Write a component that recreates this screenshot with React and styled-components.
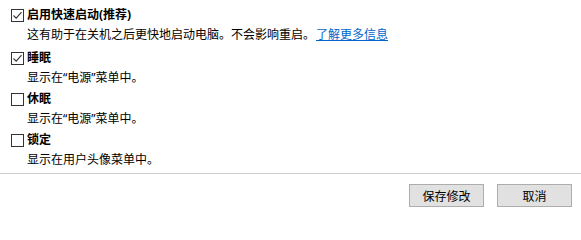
import React from "react";
import styled, { createGlobalStyle } from "styled-components";

const GlobalStyle = createGlobalStyle`
  body {
    margin: 0;
    background: #ffffff;
    font-family: "Noto Sans", "Noto Sans CJK SC", sans-serif;
  }
`;

const options = [
  {
    title: "启用快速启动(推荐)",
    desc: "这有助于在关机之后更快地启动电脑。不会影响重启。",
    link: "了解更多信息",
    checked: true,
  },
  { title: "睡眠", desc: "显示在“电源”菜单中。", checked: true },
  { title: "休眠", desc: "显示在“电源”菜单中。", checked: false },
  { title: "锁定", desc: "显示在用户头像菜单中。", checked: false },
];

export default function App() {
  return (
    <Page>
      <GlobalStyle />
      <List>
        {options.map((o, i) => (
          <Item key={i} gap={i === 0 ? 3 : 1}>
            <Head>
              <Box>
                {o.checked && (
                  <svg width="11" height="11" viewBox="0 0 11 11">
                    <path
                      d="M1.5 5.5 L4.2 8.2 L9.5 2.2"
                      fill="none"
                      stroke="#333"
                      strokeWidth="1.1"
                    />
                  </svg>
                )}
              </Box>
              <Title>{o.title}</Title>
            </Head>
            <Desc>
              {o.desc}
              {o.link && <Link href="#">{o.link}</Link>}
            </Desc>
          </Item>
        ))}
      </List>
      <Footer>
        <Button>保存修改</Button>
        <Button>取消</Button>
      </Footer>
    </Page>
  );
}

const Page = styled.div`
  width: 581px;
  height: 220px;
  display: flex;
  flex-direction: column;
`;

const List = styled.div`
  height: 173px;
  padding: 7px 0 0 11px;
  box-sizing: border-box;
  display: flex;
  flex-direction: column;
`;

const Item = styled.div`
  display: flex;
  flex-direction: column;
  margin-bottom: ${(p) => p.gap}px;
`;

const Head = styled.div`
  display: flex;
  align-items: center;
  height: 16px;
`;

const Box = styled.div`
  width: 13px;
  height: 13px;
  box-sizing: border-box;
  border: 1px solid #333333;
  background: #ffffff;
  display: flex;
  align-items: center;
  justify-content: center;
  margin-right: 3px;
`;

const Title = styled.span`
  font-size: 12px;
  font-weight: bold;
  color: #000000;
  line-height: 16px;
`;

const Desc = styled.div`
  font-size: 12px;
  color: #000000;
  line-height: 16px;
  padding: 4px 0 0 16px;
  height: 20px;
`;

const Link = styled.a`
  color: #0066cc;
  text-decoration: underline;
  margin-left: 1px;
`;

const Footer = styled.div`
  border-top: 1px solid #cccccc;
  display: flex;
  justify-content: flex-end;
  gap: 13px;
  padding: 10px 9px 0 0;
`;

const Button = styled.button`
  width: 75px;
  height: 23px;
  box-sizing: border-box;
  background: #e1e1e1;
  border: 1px solid #adadad;
  font-family: inherit;
  font-size: 12px;
  color: #000000;
  padding: 0;
`;
